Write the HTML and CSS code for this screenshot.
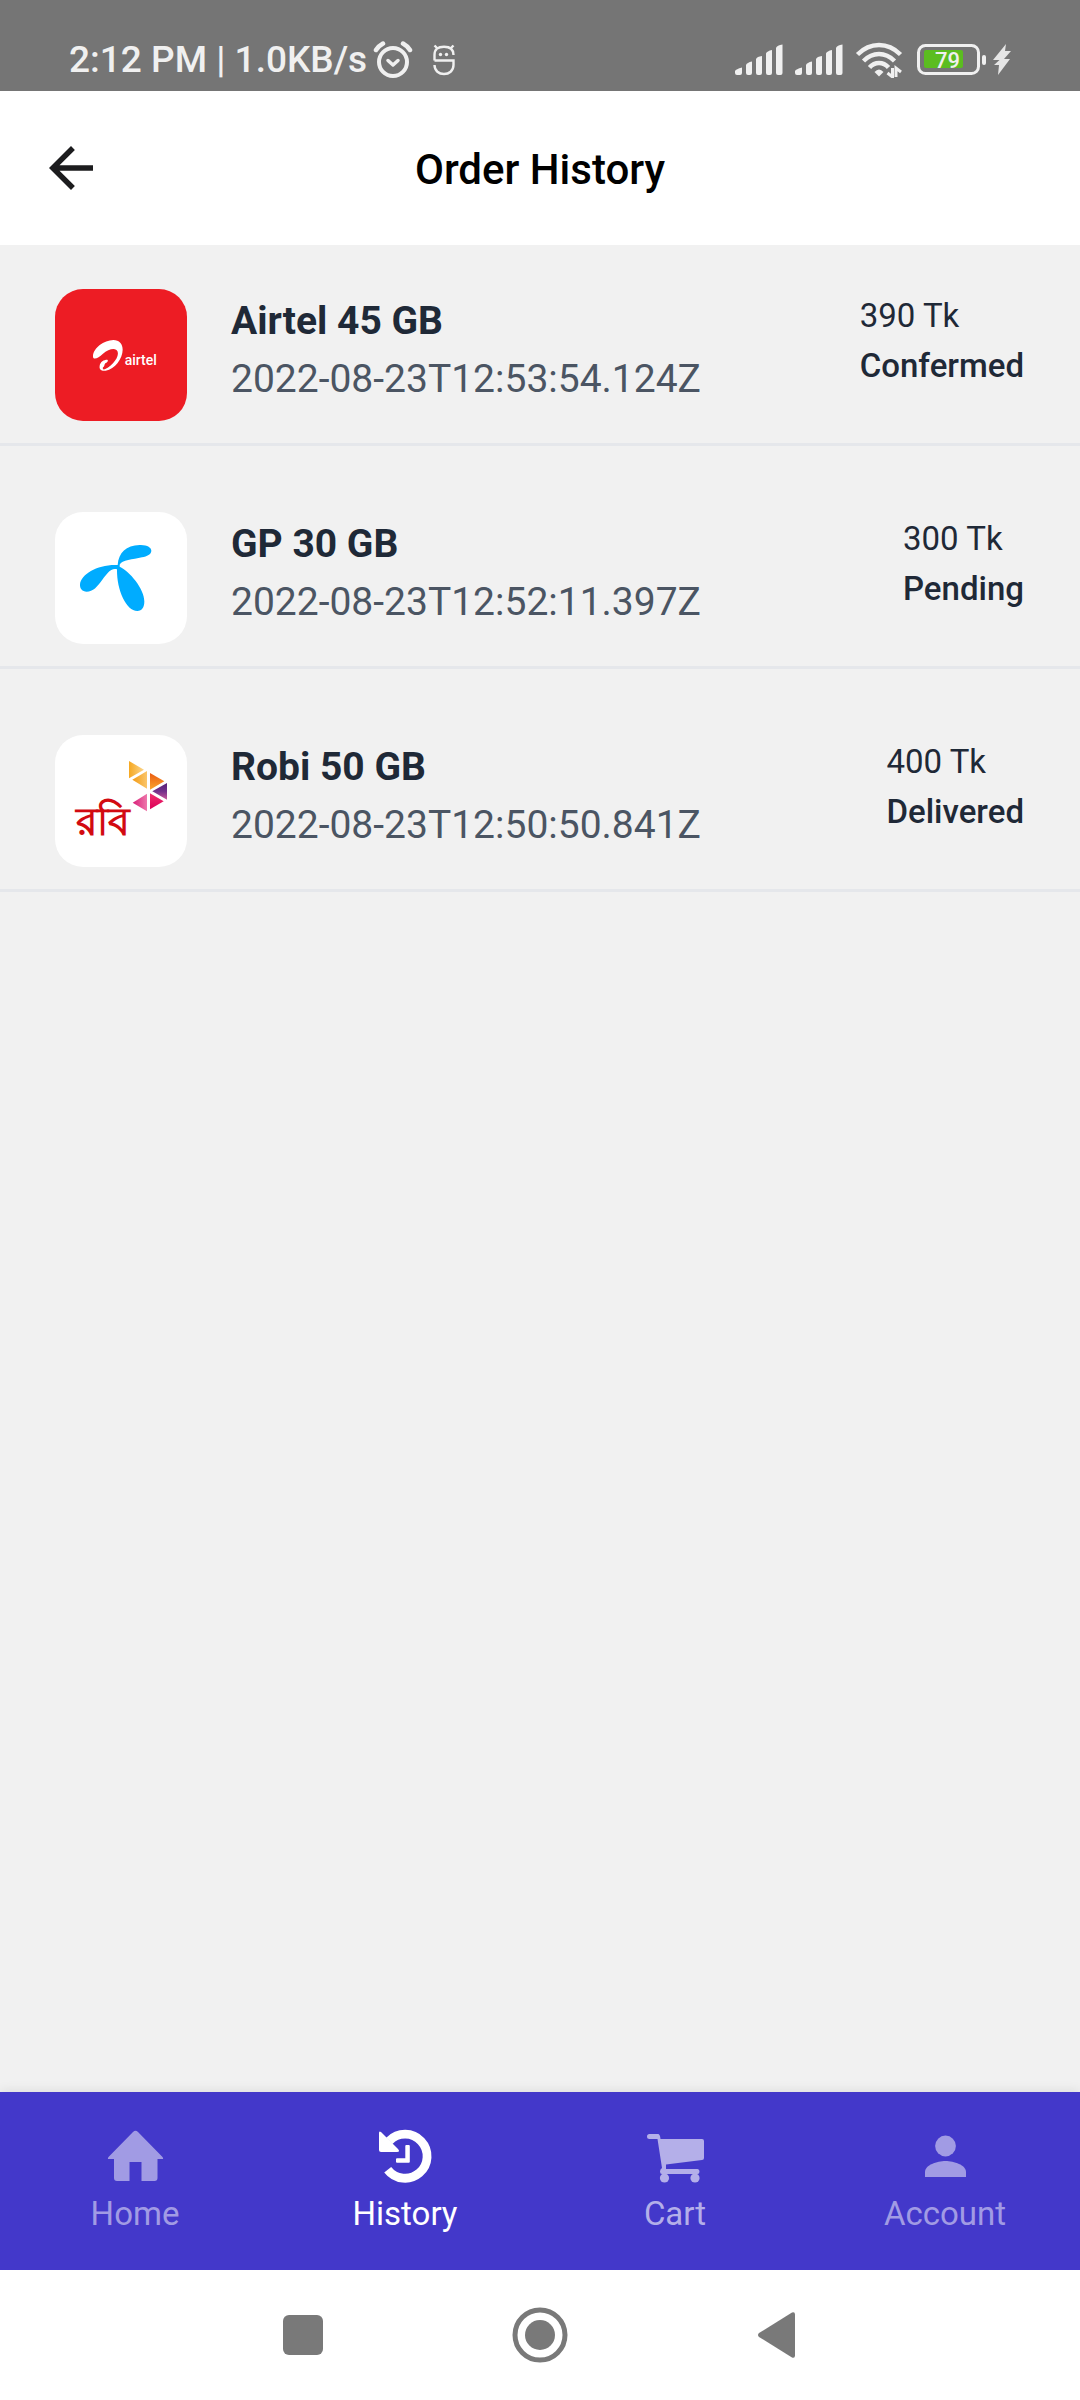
FILE: index.html
```html
<!DOCTYPE html>
<html lang="en">
<head>
<meta charset="utf-8">
<meta name="viewport" content="width=device-width, initial-scale=1">
<title>Order History</title>
<link rel="stylesheet" href="styles.css">
</head>
<body>
<div class="app">
  <div class="status">
    <div class="status-left">
      <span>2:12 PM | 1.0KB/s</span>
      <svg class="alarm" width="40" height="38" viewBox="0 0 40 38" fill="none" stroke="#f0f0f0" stroke-linecap="round" stroke-linejoin="round">
        <circle cx="20" cy="21" r="14" stroke-width="4"/>
        <path d="M3 9Q5.500 5 10 2.500M30 2.500Q34.500 5 37 9" stroke-width="4.500"/>
        <path d="M15 19.500l5 4.500 5-4.500" stroke-width="3.500"/>
      </svg>
      <svg class="mask" width="22" height="32" viewBox="0 0 22 32" fill="none" stroke="#f0f0f0" stroke-width="2.400">
        <path d="M1.500 16.500V11C1.500 5 5 2.800 11 2.800S20.500 5 20.500 11M1.500 16.500H20.500V21C20.500 27 16 30 11 30S1.500 27 1.500 21M1.500 1.500L5 5M20.500 1.500L17 5"/>
        <circle cx="7.500" cy="10.500" r="1.700" fill="#f0f0f0" stroke="none"/>
        <circle cx="13.500" cy="10.500" r="1.700" fill="#f0f0f0" stroke="none"/>
      </svg>
    </div>
    <div class="status-right">
      <svg width="48" height="32" viewBox="0 0 48 32" fill="#f0f0f0"><path id="bars" d="M0 27Q1 25 7 23.500V29Q7 31 5 31H2Q0 31 0 29zM11 21Q12 18.500 17 17.500V29Q17 31 15 31H13Q11 31 11 29zM21 15Q22 12.500 27 12V29Q27 31 25 31H23Q21 31 21 29zM31 9.500Q32 7 37 6V29Q37 31 35 31H33Q31 31 31 29zM41 4Q42 1 47.500.500V29Q47.500 31 45.500 31H43Q41 31 41 29z"/></svg>
      <svg width="48" height="32" viewBox="0 0 48 32" fill="#f0f0f0"><use href="#bars"/></svg>
      <svg width="48" height="36" viewBox="0 0 48 36" fill="none" stroke="#f0f0f0" stroke-width="4.500">
        <path d="M2.500 12.500Q12 3 24 3T45.500 12.500M8.500 19Q15.500 12 24 12T39.500 19M14.500 25.500Q18.500 21 24 21T33.500 25.500"/>
        <path d="M19.500 30Q24 25 28.500 30L24 34.500z" fill="#f0f0f0" stroke="none"/>
        <path d="M37.500 26v9l-5-4M41 35v-9l5 4" stroke-width="3"/>
      </svg>
      <svg width="96" height="32" viewBox="-2 0 96 32">
        <rect x="1.500" y="1.500" width="60" height="28" rx="7" fill="none" stroke="#f0f0f0" stroke-width="3"/>
        <rect x="7" y="6" width="39" height="18" rx="2" fill="#5bbd20"/>
        <rect x="65" y="11" width="4" height="10" rx="2" fill="#f0f0f0"/>
        <text class="charge" x="18" y="24">79</text>
        <path d="M89 0L76 16h6.500L77 21h5L81 31 93 15h-6l7-8h-6z" fill="#e6e6e6"/>
      </svg>
    </div>
  </div>

  <header class="header">
    <button class="back" aria-label="Back">
      <svg width="66" height="66" viewBox="0 0 24 24" fill="#1c1c1e"><path d="M20 11H7.830l5.590-5.590L12 4l-8 8 8 8 1.410-1.410L7.830 13H20v-2z"/></svg>
    </button>
    <h1 class="title">Order History</h1>
  </header>

  <main class="orders">
    <article class="order">
      <svg class="tile" viewBox="45 57 396 396" role="img" aria-label="Airtel">
        <path fill="#ed1c24" d="M45 57h396v396H45z"/>
        <path fill="#fff" d="M159 258C160 234 192 211 220 210C238 210 248 222 248 239C248 265 225 297 197 302C184 304 177 298 179 287C181 275 191 269 202 269C206 272 202 277 197 279C192 282 195 289 189 292C187 297 190 300 196 297C219 285 238 260 233 245C228 232 207 236 188 252C176 264 158 273 159 258z"/>
        <text class="airtel" x="254" y="285">airtel</text>
      </svg>
      <div class="info"><h2 class="name">Airtel 45 GB</h2><p class="date">2022-08-23T12:53:54.124Z</p></div>
      <div class="meta"><p>390 Tk</p><p class="state">Confermed</p></div>
    </article>
    <article class="order">
      <svg class="tile" viewBox="45 36 396 396" role="img" aria-label="GP">
        <path fill="#fff" d="M45 36h396v396H45z"/>
        <path fill="#00acff" d="M233 195C236 158 258 136 299 135C322 134 334 143 334 152C334 163 321 169 306 172C278 179 246 180 239 194V200C268 213 314 267 313 304C313 322 306 333 292 333C259 333 230 272 231 208C213 202 200 222 187 239C172 260 159 275 140 275C127 275 119 266 120 253C123 222 174 192 233 195z"/>
      </svg>
      <div class="info"><h2 class="name">GP 30 GB</h2><p class="date">2022-08-23T12:52:11.397Z</p></div>
      <div class="meta"><p>300 Tk</p><p class="state">Pending</p></div>
    </article>
    <article class="order">
      <svg class="tile" viewBox="45 44 396 396" role="img" aria-label="Robi">
        <defs>
          <linearGradient id="g1"><stop stop-color="#f6a821"/><stop offset="1" stop-color="#fbd58c"/></linearGradient>
          <linearGradient id="g2"><stop stop-color="#f39a12"/><stop offset="1" stop-color="#fac66c"/></linearGradient>
          <linearGradient id="g3" x2="0" y2="1"><stop stop-color="#ea5b12"/><stop offset="1" stop-color="#fba52e"/></linearGradient>
          <linearGradient id="g4" x2="0" y2="1"><stop stop-color="#572078"/><stop offset=".5" stop-color="#73318b"/><stop offset="1" stop-color="#c9589a"/></linearGradient>
          <linearGradient id="g5"><stop stop-color="#d81e78"/><stop offset="1" stop-color="#ee78ab"/></linearGradient>
          <linearGradient id="g6" x2="0" y2="1"><stop stop-color="#ef2f6e"/><stop offset="1" stop-color="#dc0058"/></linearGradient>
        </defs>
        <path fill="#fff" d="M45 44h396v396H45z"/>
        <path fill="url(#g1)" d="M267 122L312 148 267 174z"/>
        <path fill="url(#g2)" d="M277 178L321 152V205z"/>
        <path fill="url(#g3)" d="M330 158L373 183 330 208z"/>
        <path fill="url(#g4)" d="M381 188V238L337 213z"/>
        <path fill="url(#g5)" d="M321 220V273L278 247z"/>
        <path fill="url(#g6)" d="M330 219L371 243 330 267z"/>
        <text class="robi" x="108" y="344">রবি</text>
      </svg>
      <div class="info"><h2 class="name">Robi 50 GB</h2><p class="date">2022-08-23T12:50:50.841Z</p></div>
      <div class="meta"><p>400 Tk</p><p class="state">Delivered</p></div>
    </article>
  </main>

  <nav class="tabs">
    <a class="tab" href="#home">
      <svg width="60" height="60" viewBox="0 0 60 60" fill="currentColor"><path d="M28 5Q30.500 2.500 33 5L57.500 30Q59 32 57 32H52.500V51Q52.500 54 49.500 54H36.500V35H24.500V54H12Q9 54 9 51V32H4Q2 32 3.500 30z"/></svg>
      Home
    </a>
    <a class="tab active" href="#history" aria-current="page">
      <svg width="60" height="60" viewBox="0 0 60 60" fill="currentColor"><path d="M14.300 13.900A22 22 0 1 1 12.700 42.700" fill="none" stroke="currentColor" stroke-width="8.800"/><path d="M4 6Q4 3.500 6 5L23 22Q25.500 25 22 25H6Q4 25 4 23zM30.300 19q0-1 1-1h2.500q1 0 1 1v15.700q0 1-1 1H22q-1 0-1-1v-2.500q0-1 1-1h8.300z"/></svg>
      History
    </a>
    <a class="tab cart" href="#cart">
      <svg width="60" height="60" viewBox="0 0 60 60" fill="currentColor"><path d="M4.500 7H13Q15 7 15.500 12H57Q59 12 59 14V31Q59 33 57 33L21 37.500V42H52.500Q54.500 42 54.500 44.500T52.500 47H17Q15 47 15 44.500 15 42 17 41L12.500 12H4.500Q2 12 2 9.500T4.500 7z"/><circle cx="19.500" cy="51" r="4.600"/><circle cx="50" cy="51" r="4.600"/></svg>
      Cart
    </a>
    <a class="tab" href="#account">
      <svg width="60" height="60" viewBox="0 0 60 60" fill="currentColor"><circle cx="30.500" cy="19" r="10.400"/><path d="M10 50V45C10 38 22 34 30.500 34S51 38 51 45V50z"/></svg>
      Account
    </a>
  </nav>

  <div class="system">
    <button class="key" aria-label="Recent apps"><svg width="60" height="60" viewBox="0 0 60 60"><rect x="10" y="10" width="40" height="40" rx="6" fill="#797979"/></svg></button>
    <button class="key" aria-label="Home screen"><svg width="60" height="60" viewBox="0 0 60 60"><circle cx="30" cy="30" r="25" fill="none" stroke="#797979" stroke-width="5"/><circle cx="30" cy="30" r="15" fill="#797979"/></svg></button>
    <button class="key" aria-label="System back"><svg width="60" height="60" viewBox="0 0 60 60"><path d="M12 28L45 7.500Q48 6.500 48 9.500V50.500Q48 53.500 45 52.500L12 32Q10 30 12 28z" fill="#797979"/></svg></button>
  </div>
</div>
</body>
</html>
```

FILE: styles.css
```css
* { box-sizing: border-box; margin: 0; padding: 0; }
body { font-family: Roboto, "Liberation Sans", sans-serif; background: #f1f1f1; }
button { border: 0; background: none; font: inherit; }
svg { display: block; flex: none; }

.app { min-height: 100vh; display: flex; flex-direction: column; }

.status {
  display: flex; justify-content: space-between;
  height: 91px; padding: 30px 69px 0;
  background: #757575; color: #f0f0f0;
}
.status-left, .status-right { display: flex; align-items: center; height: 60px; }
.status-left { font-size: 37px; font-weight: 500; line-height: 60px; }
.status-right { gap: 12px; }
.status-left .alarm { margin-left: 6px; }
.status-left .mask { margin-left: 20px; }
.charge { font-size: 22px; font-weight: 500; fill: #f0f0f0; }

.header {
  display: grid; grid-template-columns: 66px 1fr 66px; align-items: center;
  height: 154px; padding: 0 38px; background: #fff;
}
.back { height: 66px; }
.title { padding-top: 4px; font-size: 42px; font-weight: 500; line-height: 50px; text-align: center; color: #000; }

.orders { flex: 1; display: flex; flex-direction: column; gap: 22px; }
.order {
  display: flex; align-items: flex-start;
  padding: 44px 56px 22px 55px; border-bottom: 3px solid #e5e7eb; color: #1f2937;
}
.tile { width: 132px; height: 132px; border-radius: 28px; }
.info { flex: 1; margin-left: 44px; padding-top: 3px; font-size: 39px; line-height: 58px; }
.name { font-size: inherit; font-weight: 700; }
.date { color: #4b5563; }
.meta { padding-top: 2px; font-size: 33px; line-height: 50px; }
.state { font-weight: 500; }
.airtel { font-size: 42px; font-weight: 500; fill: #fff; }
.robi { font-size: 118px; font-weight: 700; fill: #d20a11; }

.tabs { display: grid; grid-template-columns: repeat(4, 1fr); background: #4338ca; box-shadow: 0 -2px 10px #00000014; }
.tab {
  display: flex; flex-direction: column; align-items: center; gap: 4px;
  padding: 35px 0 33px; font-size: 33px; line-height: 46px;
  color: #a19be4; text-decoration: none;
}
.tab.active { color: #fff; }
.tab.cart { color: #b4afe9; }

.system { display: flex; justify-content: center; gap: 177px; padding: 35px 0; background: #fff; }
.key { width: 60px; height: 60px; }
```
